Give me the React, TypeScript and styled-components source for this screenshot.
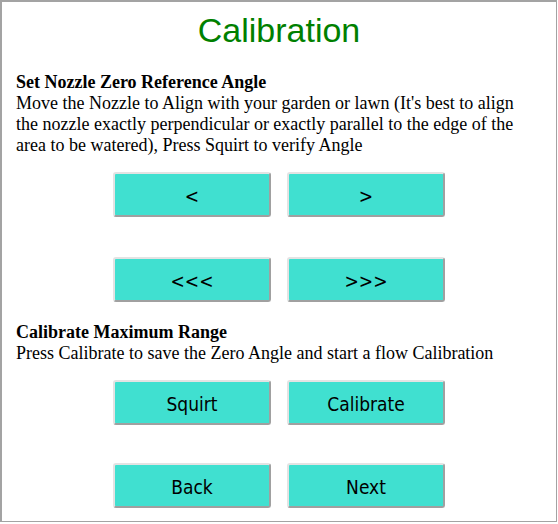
import React from "react";
import styled, { createGlobalStyle } from "styled-components";

const Global = createGlobalStyle`
  html, body { margin: 0; padding: 0; background: #ffffff; }
  * { box-sizing: border-box; }
`;

const Panel = styled.div`
  width: 557px;
  height: 522px;
  border: 2px solid #a3a3a3;
  border-right-width: 1px;
  border-bottom-width: 1px;
  padding: 9px 24px 0 14px;
  background: #ffffff;
`;

const Title = styled.h1`
  margin: 0;
  padding-left: 10px;
  font-family: "Liberation Sans", Arial, sans-serif;
  font-weight: normal;
  font-size: 34px;
  line-height: 39px;
  color: #008000;
  text-align: center;
`;

const Section = styled.div<{ $top: number }>`
  margin-top: ${(p) => p.$top}px;
  font-family: "Liberation Serif", "Times New Roman", serif;
  font-size: 18px;
  line-height: 21px;
  color: #000000;
`;

const Heading = styled.div`
  font-weight: bold;
`;

const Row = styled.div<{ $top: number }>`
  display: flex;
  justify-content: center;
  gap: 16px;
  padding-left: 10px;
  margin-top: ${(p) => p.$top}px;
`;

const Button = styled.button`
  width: 158px;
  height: 45px;
  padding: 2px 0 0 0;
  background: #40e0d0;
  border: 2px solid;
  border-color: #e3e3e3 #a0a0a0 #a0a0a0 #e3e3e3;
  border-radius: 3px;
  font-family: "DejaVu Sans Condensed", "DejaVu Sans", sans-serif;
  font-stretch: condensed;
  font-size: 19px;
  color: #000000;
  display: flex;
  align-items: center;
  justify-content: center;
  cursor: pointer;
`;

export default function App() {
  return (
    <>
      <Global />
      <Panel>
        <Title>Calibration</Title>
        <Section $top={22}>
          <Heading>Set Nozzle Zero Reference Angle</Heading>
          Move the Nozzle to Align with your garden or lawn (It's best to align
          the nozzle exactly perpendicular or exactly parallel to the edge of the
          area to be watered), Press Squirt to verify Angle
        </Section>
        <Row $top={16}>
          <Button>&lt;</Button>
          <Button>&gt;</Button>
        </Row>
        <Row $top={40}>
          <Button>&lt;&lt;&lt;</Button>
          <Button>&gt;&gt;&gt;</Button>
        </Row>
        <Section $top={20}>
          <Heading>Calibrate Maximum Range</Heading>
          Press Calibrate to save the Zero Angle and start a flow Calibration
        </Section>
        <Row $top={16}>
          <Button>Squirt</Button>
          <Button>Calibrate</Button>
        </Row>
        <Row $top={38}>
          <Button>Back</Button>
          <Button>Next</Button>
        </Row>
      </Panel>
    </>
  );
}
